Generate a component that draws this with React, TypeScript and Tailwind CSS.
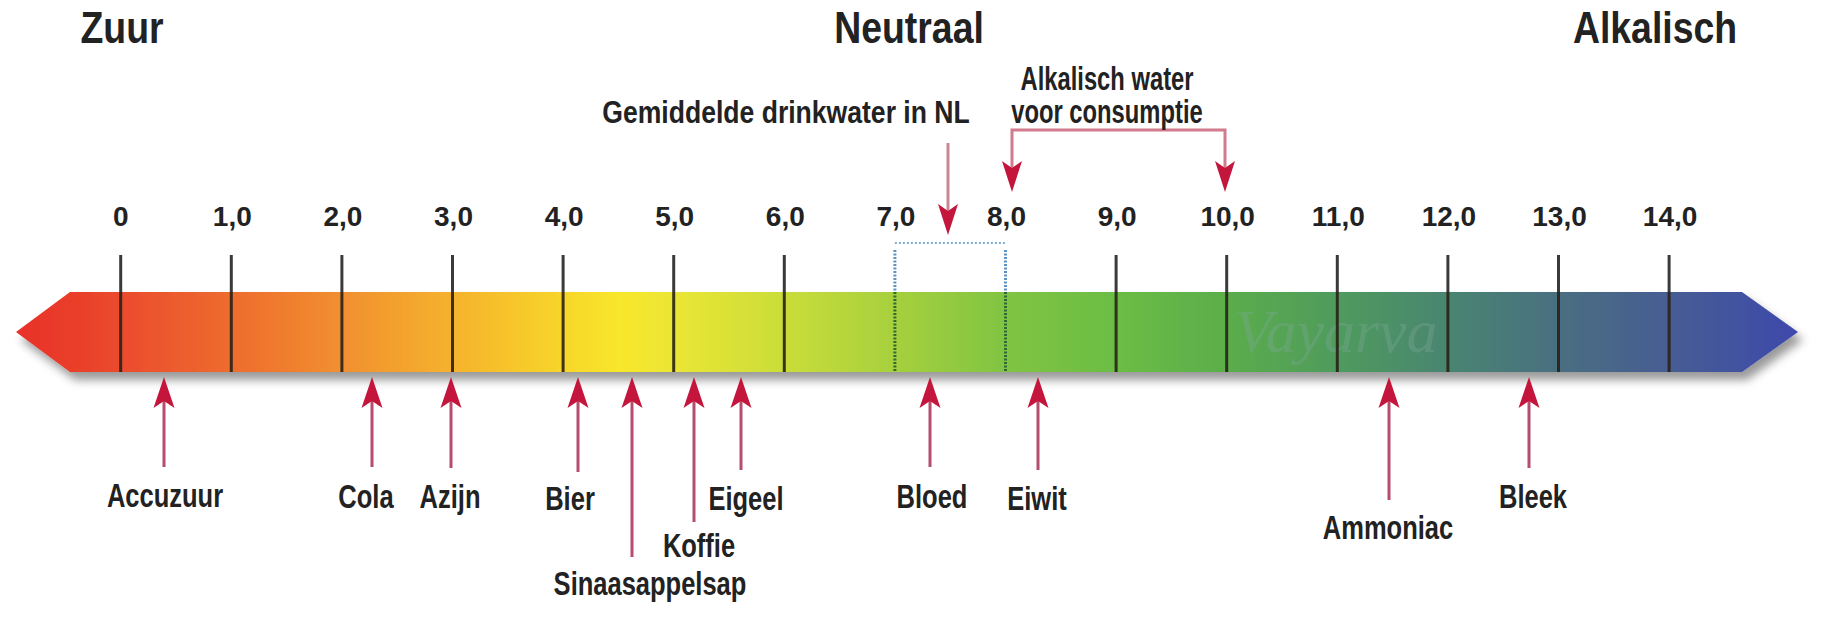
const X0 = 120.7;
const STEP = 110.6;
const tx = (ph: number) => X0 + STEP * ph;

type Marker = {
  label: string;
  x: number;
  lineEnd: number;
  labelX: number;
  capTop: number;
};

const markers: Marker[] = [
  { label: 'Accuzuur', x: 164, lineEnd: 467, labelX: 165, capTop: 482 },
  { label: 'Cola', x: 372, lineEnd: 467, labelX: 366, capTop: 483 },
  { label: 'Azijn', x: 451, lineEnd: 468, labelX: 450, capTop: 483 },
  { label: 'Bier', x: 578, lineEnd: 472, labelX: 570, capTop: 485 },
  { label: 'Sinaasappelsap', x: 632, lineEnd: 557, labelX: 650, capTop: 570 },
  { label: 'Koffie', x: 694, lineEnd: 522, labelX: 699, capTop: 532 },
  { label: 'Eigeel', x: 741, lineEnd: 470, labelX: 746, capTop: 485 },
  { label: 'Bloed', x: 930, lineEnd: 467, labelX: 932, capTop: 483 },
  { label: 'Eiwit', x: 1038, lineEnd: 470, labelX: 1037, capTop: 485 },
  { label: 'Ammoniac', x: 1389, lineEnd: 500, labelX: 1388, capTop: 514 },
  { label: 'Bleek', x: 1529, lineEnd: 468, labelX: 1533, capTop: 483 },
];

const stops: [number, string][] = [
  [16, '#e8302a'],
  [121, '#eb4b2d'],
  [231, '#ee6c2e'],
  [341, '#f18f30'],
  [452, '#f5b22d'],
  [560, '#f7d52b'],
  [620, '#f8e72b'],
  [673, '#ebe634'],
  [784, '#cadd39'],
  [895, '#a6d03d'],
  [1006, '#80c443'],
  [1116, '#6bbd44'],
  [1227, '#5bad4b'],
  [1337, '#4f9b5d'],
  [1448, '#4a8571'],
  [1558, '#496f81'],
  [1669, '#465d93'],
  [1798, '#3f49ab'],
];

const upHead = (x: number) => `M ${x} 377 L ${x + 10.5} 408 L ${x} 401 L ${x - 10.5} 408 Z`;
const downHead = (x: number, t: number) => `M ${x} ${t} L ${x + 10} ${t - 31} L ${x} ${t - 24} L ${x - 10} ${t - 31} Z`;

const cond = "font-['Liberation_Sans',Arial,sans-serif] font-bold";

function ScaleText({ x, top, className, children }: { x: number; top: number; className: string; children: React.ReactNode }) {
  return (
    <span
      className={`absolute -translate-x-1/2 whitespace-nowrap leading-none text-[#222] ${className}`}
      style={{ left: x, top }}
    >
      {children}
    </span>
  );
}

export default function App() {
  const numbers = Array.from({ length: 15 }, (_, i) => i);

  return (
    <div className="relative h-[639px] w-[1830px] overflow-hidden bg-white">
      <svg className="absolute left-0 top-0" width={1830} height={639} viewBox="0 0 1830 639">
        <defs>
          <linearGradient id="ph" gradientUnits="userSpaceOnUse" x1={16} y1={0} x2={1798} y2={0}>
            {stops.map(([x, c]) => (
              <stop key={x} offset={(x - 16) / (1798 - 16)} stopColor={c} />
            ))}
          </linearGradient>
          <filter id="shadow" x="-5%" y="-40%" width="110%" height="190%">
            <feDropShadow dx="5" dy="8" stdDeviation="5" floodColor="#000" floodOpacity="0.4" />
          </filter>
        </defs>

        <polygon points="16,332 70,292 1742,292 1798,332 1742,372 70,372" fill="url(#ph)" filter="url(#shadow)" />

        <text
          x={1336}
          y={352}
          textAnchor="middle"
          fontFamily="'Liberation Serif', serif"
          fontStyle="italic"
          fontSize={62}
          fill="#7fa898"
          opacity={0.35}
        >
          Vayarva
        </text>

        {numbers
          .filter((i) => i !== 7 && i !== 8)
          .map((i) => (
            <g key={i}>
              <line x1={tx(i)} y1={255} x2={tx(i)} y2={292} stroke="#3a3a3a" strokeWidth={3} />
              <line x1={tx(i)} y1={292} x2={tx(i)} y2={372} stroke="#2a2216" strokeWidth={3} opacity={0.9} />
            </g>
          ))}

        {[7, 8].map((i) => (
          <g key={i}>
            <line x1={tx(i)} y1={250} x2={tx(i)} y2={292} stroke="#5d93c2" strokeWidth={3} strokeDasharray="2 1.5" />
            <line x1={tx(i)} y1={292} x2={tx(i)} y2={372} stroke="#2f6a34" strokeWidth={3} strokeDasharray="2 1.5" />
          </g>
        ))}
        <line x1={tx(7)} y1={243} x2={tx(8)} y2={243} stroke="#7fb0d4" strokeWidth={2} strokeDasharray="2 2" />

        {markers.map((m) => (
          <g key={m.label}>
            <line x1={m.x} y1={400} x2={m.x} y2={m.lineEnd} stroke="#b54d6c" strokeWidth={3} />
            <path d={upHead(m.x)} fill="#c4163c" />
          </g>
        ))}

        <line x1={948} y1={143} x2={948} y2={212} stroke="#c98795" strokeWidth={3} />
        <path d={downHead(948, 235)} fill="#c4163c" />

        <polyline points="1012,168 1012,130 1225,130 1225,168" fill="none" stroke="#d27b8d" strokeWidth={3} />
        <path d={downHead(1012, 192)} fill="#c4163c" />
        <path d={downHead(1225, 192)} fill="#c4163c" />
      </svg>

      <ScaleText x={122} top={6} className={`${cond} text-[44px] scale-x-[0.85]`}>Zuur</ScaleText>
      <ScaleText x={909} top={6} className={`${cond} text-[44px] scale-x-[0.85]`}>Neutraal</ScaleText>
      <ScaleText x={1655} top={6} className={`${cond} text-[44px] scale-x-[0.85]`}>Alkalisch</ScaleText>

      <ScaleText x={786} top={96} className={`${cond} text-[32px] scale-x-[0.83]`}>Gemiddelde drinkwater in NL</ScaleText>
      <ScaleText x={1107} top={62} className={`${cond} text-[33px] leading-[27px] text-center scale-x-[0.72]`}>
        Alkalisch water
        <br />
        voor consumptie
      </ScaleText>

      {numbers.map((i) => (
        <ScaleText key={i} x={tx(i) + (i === 0 ? 0 : 1)} top={203} className={`${cond} text-[28px]`}>
          {i === 0 ? '0' : `${i},0`}
        </ScaleText>
      ))}

      {markers.map((m) => (
        <ScaleText key={m.label} x={m.labelX} top={m.capTop - 4} className={`${cond} text-[34px] scale-x-[0.75]`}>
          {m.label}
        </ScaleText>
      ))}
    </div>
  );
}
